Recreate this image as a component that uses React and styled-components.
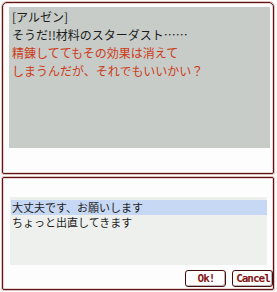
import React from "react";
import styled, { createGlobalStyle } from "styled-components";

const Global = createGlobalStyle`
  html, body { margin: 0; padding: 0; background: #fbfdfb; }
  body { font-family: "Noto Sans CJK JP", "DejaVu Sans", sans-serif; }
`;

const Page = styled.div`
  width: 277px;
  height: 292px;
  box-sizing: border-box;
  padding: 2px 3px 2px 2px;
  display: flex;
  flex-direction: column;
  gap: 3px;
`;

const Panel = styled.div`
  box-sizing: border-box;
  height: ${(p) => p.$h}px;
  background: #fcfdfc;
  border: 1px solid #5e1212;
  border-radius: ${(p) => p.$radius};
  box-shadow: 0 0 0 1px rgba(170, 90, 90, 0.35), inset 0 0 0 1px rgba(170, 90, 90, 0.25);
  display: flex;
  flex-direction: column;
`;

const MessagePanel = styled(Panel)`
  padding: 4px 4px 0 6px;
`;

const MessageBox = styled.div`
  width: 261px;
  height: 141px;
  box-sizing: border-box;
  background: #c8ccc8;
  padding: 1px 3px;
  font-size: 12px;
  line-height: 18px;
  color: #1c1c1c;
  white-space: nowrap;
`;

const Line = styled.div`
  color: ${(p) => (p.$red ? "#cc3a18" : "#1c1c1c")};
`;

const ChoicePanel = styled(Panel)`
  padding: 19px 6px 0 7px;
`;

const List = styled.div`
  height: 68px;
  box-sizing: border-box;
  background: #eef0ee;
  padding: 3px 0 0 1px;
`;

const Option = styled.div`
  height: 15px;
  line-height: 15px;
  font-size: 11px;
  padding-left: 1px;
  color: #1c1c1c;
  background: ${(p) => (p.$selected ? "#c6d8f4" : "transparent")};
  white-space: nowrap;
  overflow: hidden;
`;

const ButtonRow = styled.div`
  display: flex;
  justify-content: flex-end;
  gap: 6px;
  margin-top: 5px;
  margin-right: -6px;
`;

const Button = styled.button`
  width: 41px;
  height: 17px;
  box-sizing: border-box;
  margin: 0;
  padding: 0 0 0 1px;
  background: #ffffff;
  border: 1px solid #4a0c0c;
  border-radius: 3px;
  box-shadow: inset -1px -1px 0 #b8b8b8, inset 1px 1px 0 #ffffff;
  color: #861616;
  font-family: "DejaVu Sans Mono", "Liberation Mono", monospace;
  font-weight: bold;
  font-size: 11px;
  letter-spacing: -1px;
  line-height: 15px;
  text-align: center;
  cursor: pointer;
`;

export default function App() {
  return (
    <>
      <Global />
      <Page>
        <MessagePanel $h={173} $radius="5px 5px 2px 2px">
          <MessageBox>
            <Line>[アルゼン]</Line>
            <Line>そうだ!!材料のスターダスト……</Line>
            <Line $red>精錬しててもその効果は消えて</Line>
            <Line $red>しまうんだが、それでもいいかい？</Line>
          </MessageBox>
        </MessagePanel>
        <ChoicePanel $h={113} $radius="2px 2px 2px 2px">
          <List>
            <Option $selected>大丈夫です、お願いします</Option>
            <Option>ちょっと出直してきます</Option>
          </List>
          <ButtonRow>
            <Button>Ok!</Button>
            <Button>Cancel</Button>
          </ButtonRow>
        </ChoicePanel>
      </Page>
    </>
  );
}
